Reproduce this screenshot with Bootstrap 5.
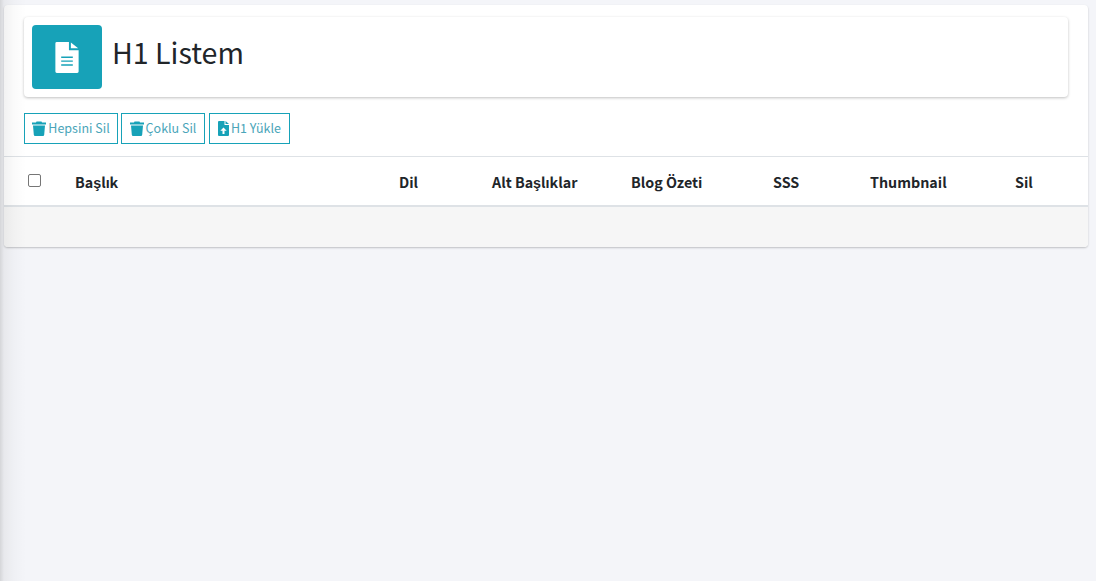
<!DOCTYPE html>
<html lang="tr">
<head>
    <meta charset="UTF-8"/>
    <title>H1 Listem</title>
    <link href="https://cdn.jsdelivr.net/npm/bootstrap@5.3.3/dist/css/bootstrap.min.css" rel="stylesheet"/>
    <style>
        body{background:#f4f5f9;color:#212529;font-family:"Noto Sans CJK SC","Liberation Sans",sans-serif;font-size:14px;min-height:581px;overflow:hidden}
        .side-shade{position:absolute;left:0;top:0;bottom:0;width:26px;pointer-events:none;background:linear-gradient(90deg,rgba(0,0,0,.13) 0,rgba(0,0,0,.05) 4px,rgba(0,0,0,.018) 14px,rgba(0,0,0,0) 26px)}
        .page-wrap{padding:5px 8px 0 4px}
        .main-box{background:#fff;border-radius:4px;box-shadow:0 1px 2px rgba(0,0,0,.22);overflow:hidden}
        .title-box{margin:12px 20px 16px;padding:8px;border-radius:4px;background:#fff;box-shadow:0 1px 3px rgba(0,0,0,.25)}
        .title-icon{width:70px;height:64px;background:#17a2b8;border-radius:4px;margin-right:2px}
        .title-text{font-size:28.6px;line-height:1;font-weight:400;color:#212529;padding-bottom:10px}
        .tool-btn{--bs-btn-padding-x:0;--bs-btn-padding-y:0;--bs-btn-font-size:12.5px;--bs-btn-color:#4aa5b9;--bs-btn-border-color:#17a2b8;--bs-btn-border-radius:0;height:31px;display:flex;align-items:center;justify-content:center;gap:2px}
        .tool-btn svg{display:block}
        .btn-all{width:94px}
        .btn-multi{width:84px}
        .btn-upload{width:81px}
        .tool-row{margin:0 20px 12px;gap:3px}
        .tool-row .btn-upload{margin-left:1px}
        .list-table{table-layout:fixed;width:100%;margin:0;border-top:1px solid #dee2e6}
        .list-table th{height:49px;padding:1px 0 0;vertical-align:middle;font-size:14.3px;font-weight:700;border-bottom:2px solid #dee2e6;color:#212529}
        .list-table th:first-child{padding-left:24px}
        .list-table .form-check-input{display:block;margin:0 0 1px;width:13px;height:13px;border-color:#767676;border-radius:2px}
        .c1{width:71px}.c2{width:324px}.c3{width:93px}.c4{width:139px}.c5{width:142px}.c6{width:97px}.c7{width:145px}
        .foot-bar{height:40px;background:#f6f6f6}
    </style>
</head>
<body>
<div class="page-wrap">
    <div class="main-box">
        <div class="title-box d-flex align-items-center gap-2">
            <div class="title-icon d-flex align-items-center justify-content-center">
                <!-- dosya ikonu -->
                <svg width="24" height="31" viewBox="0 0 24 32">
                    <path fill="#fff" d="M1.500 0H14v8.500h10V30.500A1.500 1.500 0 0 1 22.500 32H1.500A1.500 1.500 0 0 1 0 30.500V1.500A1.500 1.500 0 0 1 1.500 0z"/>
                    <path fill="#fff" d="M16 0.500 23.500 6.500H16z"/>
                    <path fill="#17a2b8" d="M6 15h12v1.500H6zM6 19h12v1.500H6zM6 23h12v1.500H6z"/>
                </svg>
            </div>
            <h1 class="title-text m-0">H1 Listem</h1>
        </div>

        <div class="tool-row d-flex">
            <button class="btn tool-btn btn-all">
                <svg width="14" height="15" viewBox="0 0 14 15"><path fill="#17a2b8" d="M4.500.500h5l.5 1h4v2H0v-2h4zM1 4.500h12l-.8 9.300a1.300 1.300 0 0 1-1.300 1.200H3.100a1.300 1.300 0 0 1-1.300-1.200z"/></svg>
                Hepsini Sil
            </button>
            <button class="btn tool-btn btn-multi">
                <svg width="14" height="15" viewBox="0 0 14 15"><path fill="#17a2b8" d="M4.500.500h5l.5 1h4v2H0v-2h4zM1 4.500h12l-.8 9.300a1.300 1.300 0 0 1-1.300 1.200H3.100a1.300 1.300 0 0 1-1.300-1.200z"/></svg>
                Çoklu Sil
            </button>
            <button class="btn tool-btn btn-upload">
                <svg width="11" height="15" viewBox="0 0 11 15"><path fill="#17a2b8" fill-rule="evenodd" d="M1 0h5.500v4H11v10a1 1 0 0 1-1 1H1a1 1 0 0 1-1-1V1a1 1 0 0 1 1-1zM5.500 6.500 2.300 9.700h2.200V13h2V9.700h2.200z"/><path fill="#17a2b8" d="M7.500 0 11 3H7.500z"/></svg>
                H1 Yükle
            </button>
        </div>

        <table class="list-table">
            <colgroup>
                <col class="c1"/><col class="c2"/><col class="c3"/><col class="c4"/><col class="c5"/><col class="c6"/><col class="c7"/><col/>
            </colgroup>
            <thead>
                <tr>
                    <th><input type="checkbox" class="form-check-input" aria-label="Hepsini seç"/></th>
                    <th>Başlık</th>
                    <th>Dil</th>
                    <th>Alt Başlıklar</th>
                    <th>Blog Özeti</th>
                    <th>SSS</th>
                    <th>Thumbnail</th>
                    <th>Sil</th>
                </tr>
            </thead>
        </table>
        <div class="foot-bar"></div>
    </div>
</div>
<div class="side-shade"></div>
<script src="https://cdn.jsdelivr.net/npm/bootstrap@5.3.3/dist/js/bootstrap.bundle.min.js"></script>
</body>
</html>
